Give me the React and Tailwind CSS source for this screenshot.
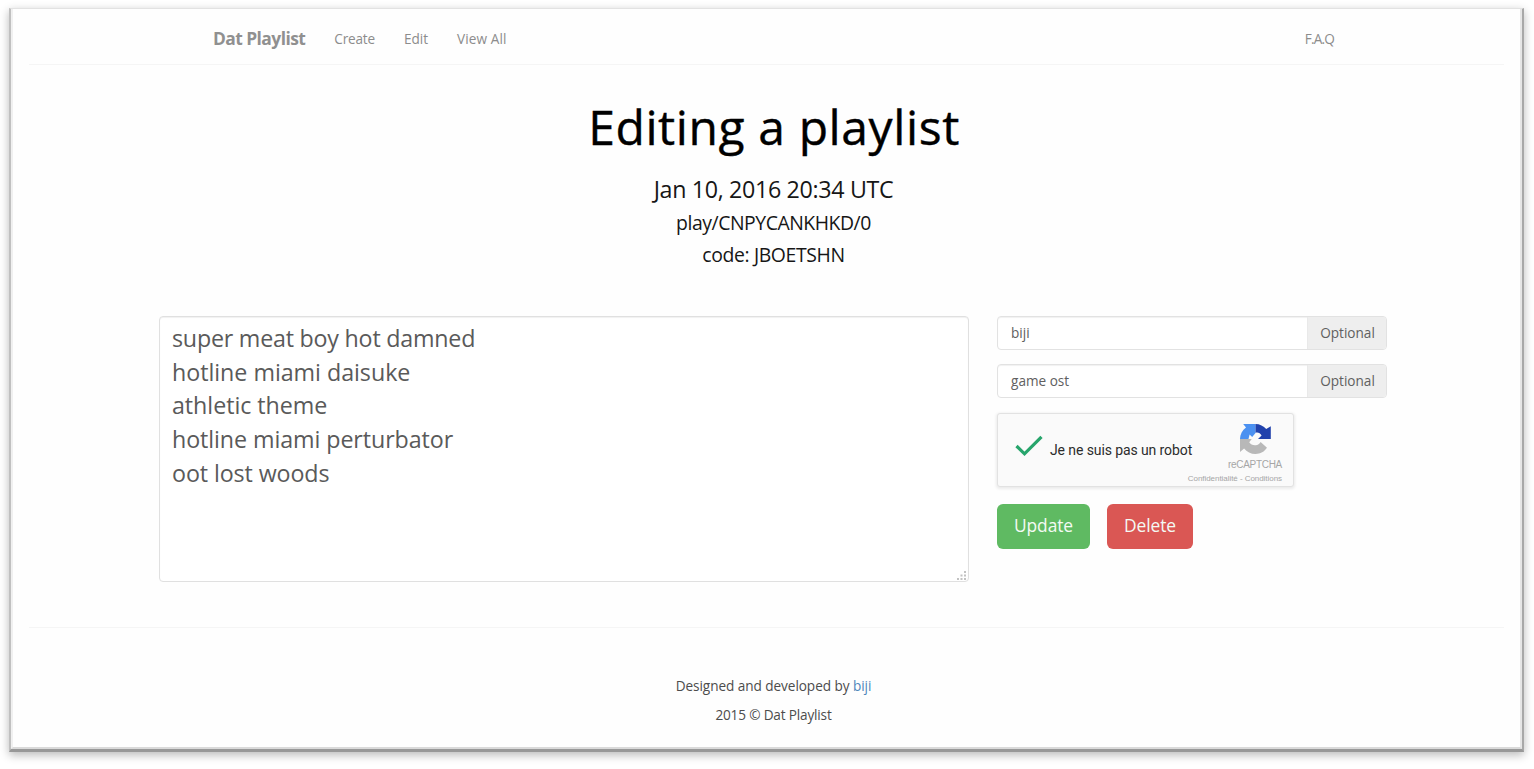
import React from "react";

const tracks = [
  ["super meat boy hot damned", "tracking-[-0.22px]"],
  ["hotline miami daisuke", "tracking-[-0.03px]"],
  ["athletic theme", "tracking-[-0.05px]"],
  ["hotline miami perturbator", "tracking-[-0.08px]"],
  ["oot lost woods", "tracking-[-0.1px]"],
];

function Navbar() {
  return (
    <nav className="mx-4 flex h-[56px] items-center border-b border-[#f5f5f5] pt-1 pr-[170px] pl-[184px] text-[13.6px] tracking-[-0.2px] text-[#8c8c8c]">
      <a className="text-[17.4px] font-bold tracking-[-0.55px] text-[#909090]">Dat Playlist</a>
      <div className="ml-[29px] flex items-center gap-[29px] pt-px">
        <a>Create</a>
        <a className="tracking-normal">Edit</a>
        <a className="tracking-[0.1px]">View All</a>
      </div>
      <a className="ml-auto pt-px tracking-[-0.8px]">F.A.Q</a>
    </nav>
  );
}

function Field({ value }) {
  return (
    <div className="flex h-[34px] overflow-hidden rounded border border-[#e2e2e2] bg-white text-[13.6px] text-[#606060] shadow-[inset_0_1px_1px_rgba(0,0,0,0.06)]">
      <div className="flex flex-1 items-center pl-[13px]">{value}</div>
      <div className="flex w-[79px] items-center justify-center border-l border-[#e9e9e9] bg-[#eeeeee] pl-px">
        Optional
      </div>
    </div>
  );
}

function CaptchaLogo() {
  return (
    <svg className="h-[30px] w-[31px]" viewBox="0 0 31 30">
      <path d="M15.5 0 H3.2 L6 3.4 C2.3 6.2 0 10.2 0 15 H8.5 L9.6 10.6 L12.2 13 L15.5 9 Z" fill="#4b91f1" />
      <path d="M15.5 0 C19.8 0 23.6 2 26.2 5 L30.8 2.2 V15 H18 L21.6 11.6 C20.2 9 18 8 15.5 8.8 Z" fill="#2142ac" />
      <path d="M0 15 H11.8 L9.2 18.3 C10.6 20.4 12.8 21.4 15.6 21.2 C17.9 21 19.6 20 20.6 18 L27 23.8 C24.4 27.6 20.5 30 15.5 30 C10.8 30 6.8 27.8 4.1 24.4 L0 28 Z" fill="#b8b8b8" />
    </svg>
  );
}

function Captcha() {
  return (
    <div className="flex h-[74px] w-[297px] justify-between rounded-[3px] border border-[#e2e2e2] bg-[#fafafa] pr-[11px] pl-[17px] font-['Roboto',sans-serif] shadow-[0_1px_3px_1px_rgba(0,0,0,0.08)]">
      <div className="flex items-center">
        <svg className="-mt-2 h-[22px] w-[28px]" viewBox="0 0 28 22">
          <path d="M1.5 11 L9.5 18.8 L26.5 1.8" fill="none" stroke="#27a56c" strokeWidth="3.2" />
        </svg>
        <span className="ml-[7px] text-[14px] tracking-[-0.1px] whitespace-nowrap text-[#2c2c2c]">
          Je ne suis pas un robot
        </span>
      </div>
      <div className="-ml-4 flex flex-col items-end pt-[10px] font-['Liberation_Sans',sans-serif] text-[#a6a6a6]">
        <div className="mr-[11px]">
          <CaptchaLogo />
        </div>
        <span className="mt-[4px] text-[10px] leading-[13px] tracking-[-0.3px]">reCAPTCHA</span>
        <span className="mt-[2px] text-[8px] leading-[11px] tracking-[-0.05px] whitespace-nowrap">
          Confidentialité - Conditions
        </span>
      </div>
    </div>
  );
}

function Grip() {
  return (
    <svg className="absolute right-[2px] bottom-[1px] h-[9px] w-[9px]" viewBox="0 0 9 9" fill="#c2c2c2">
      <rect x="7" y="0" width="2" height="2" />
      <rect x="3.5" y="3.5" width="2" height="2" />
      <rect x="7" y="3.5" width="2" height="2" />
      <rect x="0" y="7" width="2" height="2" />
      <rect x="3.5" y="7" width="2" height="2" />
      <rect x="7" y="7" width="2" height="2" />
    </svg>
  );
}

export default function App() {
  return (
    <div className="h-[769px] w-[1534px] overflow-hidden bg-white pt-2 pl-[9px] font-['Open_Sans','Noto_Sans',sans-serif]">
      <div className="h-[744px] w-[1515px] border-t border-r-2 border-b-3 border-l-2 border-t-[#e2e2e2] border-r-[#a8a8a8] border-b-[#989898] border-l-[#c0c0c0] shadow-[0_3px_9px_rgba(0,0,0,0.28)]">
        <div className="h-full border-r-2 border-b-2 border-l-2 border-r-[#e6e6e6] border-b-[#dadada] border-l-[#f0f0f0] bg-[#fefefe]">
          <Navbar />
          <div className="ml-[146px] w-[1228px]">
            <header className="flex h-[251px] flex-col items-center pt-[27px] whitespace-nowrap text-[#161616]">
              <h1 className="pl-[2px] text-[48px] leading-[70px] tracking-[0.6px] text-black [-webkit-text-stroke:0.4px_#000000]">Editing a playlist</h1>
              <p className="mt-[10px] pl-px text-[23.25px] leading-[34px] tracking-[-0.34px]">Jan 10, 2016 20:34 UTC</p>
              <p className="mt-px pl-px text-[19.4px] leading-[32px] tracking-[-0.46px]">play/CNPYCANKHKD/0</p>
              <p className="pl-px text-[19.4px] leading-[31px] tracking-[-0.38px]">code: JBOETSHN</p>
            </header>
            <main className="grid grid-cols-[810px_390px] gap-7">
              <div className="relative h-[266px] rounded border border-[#e0e0e0] bg-white pt-[5px] pl-3 text-[23.25px] leading-[33.65px] text-[#5a5a5a] shadow-[inset_0_1px_1px_rgba(0,0,0,0.06)]">
                {tracks.map(([name, tracking]) => (
                  <div key={name} className={tracking}>{name}</div>
                ))}
                <Grip />
              </div>
              <div className="flex flex-col">
                <Field value="biji" />
                <div className="mt-[14px]">
                  <Field value="game ost" />
                </div>
                <div className="mt-[15px]">
                  <Captcha />
                </div>
                <div className="mt-[17px] flex gap-[17px] text-[17.4px] tracking-[-0.1px] text-[#f4faf4]">
                  <button className="h-[45px] w-[93px] rounded-md bg-[#5fba62] pb-0.5">Update</button>
                  <button className="h-[45px] w-[86px] rounded-md bg-[#da5754] pb-0.5">Delete</button>
                </div>
              </div>
            </main>
          </div>
          <footer className="mx-4 mt-[45px] border-t border-[#f5f5f5] pt-[43px] pl-[14px] text-center text-[13.6px] leading-[29px] tracking-[-0.06px] text-[#4c4c4c]">
            <p>
              Designed and developed by <a className="text-[#4f87bb]">biji</a>
            </p>
            <p className="tracking-[-0.17px]">2015 © Dat Playlist</p>
          </footer>
        </div>
      </div>
    </div>
  );
}
